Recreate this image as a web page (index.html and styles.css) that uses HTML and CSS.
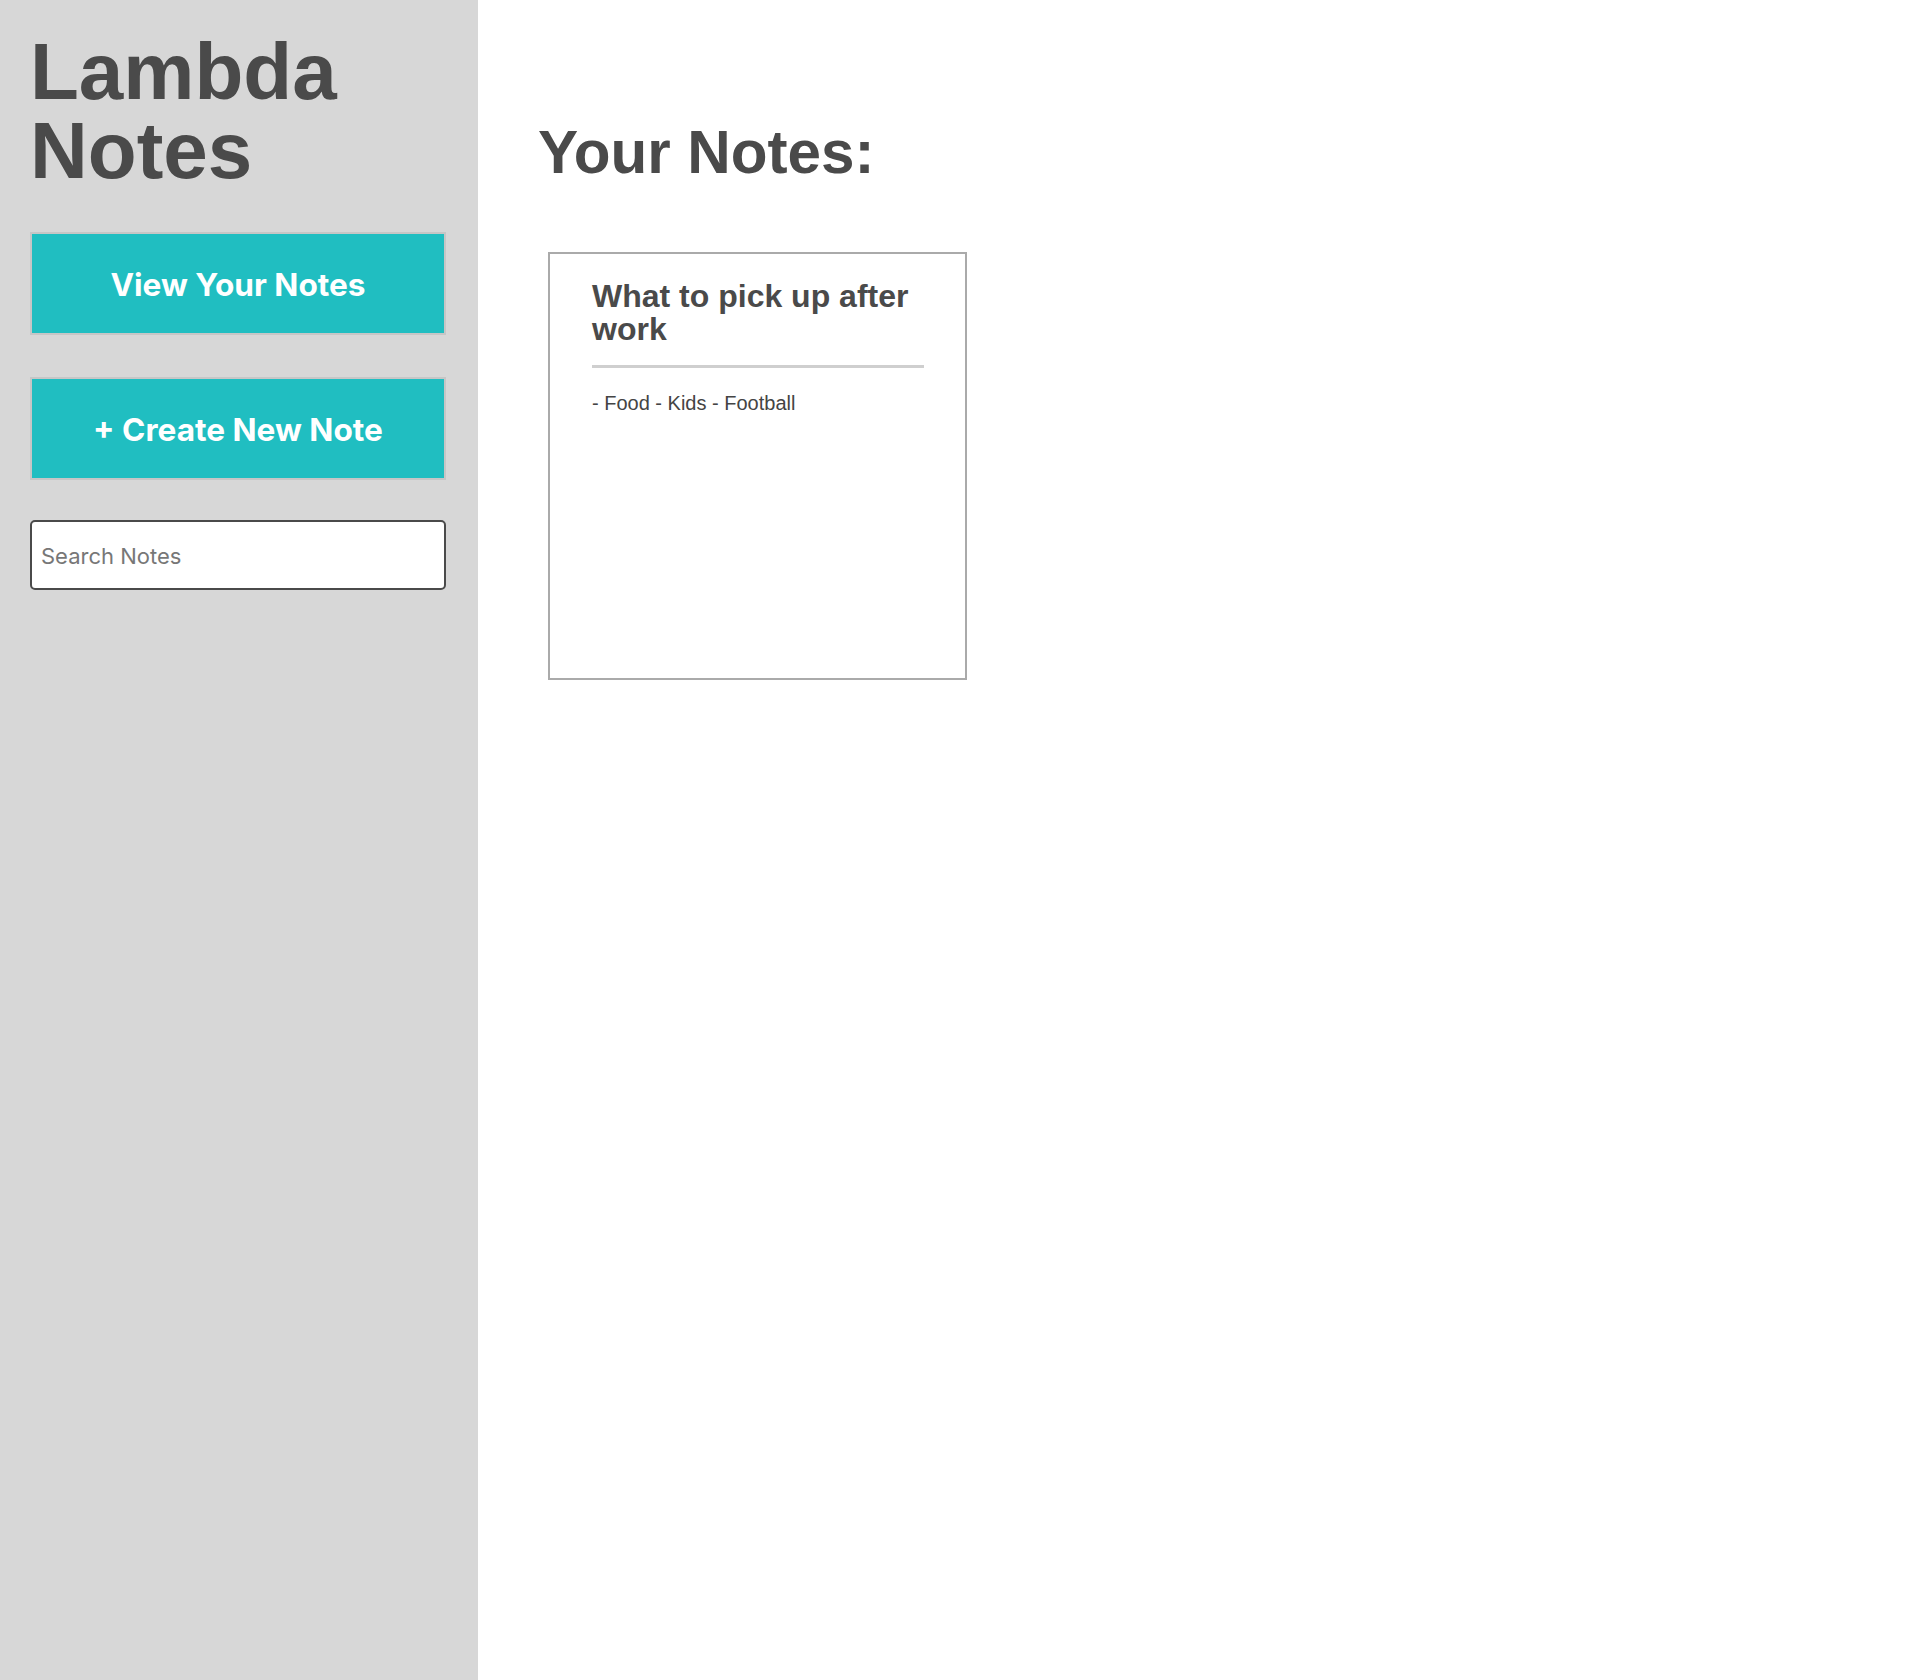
FILE: index.html
```html
<!DOCTYPE html>
<html lang="en">
<head>
<meta charset="utf-8">
<title>Lambda Notes</title>
<link rel="stylesheet" href="styles.css">
</head>
<body>
<div class="app">
  <aside class="sidebar">
    <h1 class="brand">Lambda<br>Notes</h1>
    <a class="nav-btn" href="#">View Your Notes</a>
    <a class="nav-btn" href="#">+ Create New Note</a>
    <input class="search" type="text" placeholder="Search Notes">
  </aside>
  <main class="main">
    <h2 class="page-title">Your Notes:</h2>
    <div class="notes">
      <div class="note-card">
        <h3 class="note-title">What to pick up after work</h3>
        <p class="note-body">- Food - Kids - Football</p>
      </div>
    </div>
  </main>
</div>
</body>
</html>
```
FILE: styles.css
```css
* { box-sizing: border-box; }
html, body { margin: 0; padding: 0; }
body {
  font-family: "Liberation Sans", Arial, sans-serif;
  color: #4a4a4a;
  background: #ffffff;
}
.app {
  display: flex;
  min-height: 1680px;
}
.sidebar {
  width: 478px;
  flex-shrink: 0;
  background: #d7d7d7;
  padding: 32px 32px 0 30px;
  display: flex;
  flex-direction: column;
}
.brand {
  margin: 0 0 42px 0;
  font-size: 80px;
  line-height: 79px;
  font-weight: 700;
  color: #4a4a4a;
}
.nav-btn {
  display: flex;
  align-items: center;
  justify-content: center;
  height: 103px;
  margin-bottom: 42px;
  padding-top: 2px;
  background: #20bec1;
  border: 2px solid #c6c6c6;
  color: #ffffff;
  text-decoration: none;
  font-family: Inter, "Liberation Sans", sans-serif;
  font-weight: 700;
  font-size: 31.6px;
}
.nav-btn + .nav-btn { margin-bottom: 40px; }
.search {
  height: 70px;
  width: 100%;
  border: 2px solid #4a4a4a;
  border-radius: 5px;
  padding: 2px 9px 0 9px;
  font-family: Inter, "Liberation Sans", sans-serif;
  font-size: 22px;
  color: #4a4a4a;
  background: #fff;
  outline: none;
}
.search::placeholder { color: #777777; }
.main {
  flex: 1;
  padding: 118px 0 0 60px;
}
.page-title {
  margin: 0 0 65px 0;
  font-size: 60.2px;
  line-height: 69px;
  font-weight: 700;
  color: #4a4a4a;
}
.notes {
  display: flex;
  flex-wrap: wrap;
  gap: 30px;
  padding-left: 10px;
}
.note-card {
  width: 419px;
  height: 428px;
  border: 2px solid #aaaaaa;
  padding: 26px 41px 0 42px;
  background: #fff;
}
.note-title {
  margin: 0;
  padding-bottom: 19px;
  border-bottom: 3px solid #cfcfcf;
  font-size: 32px;
  line-height: 33px;
  font-weight: 700;
  color: #4a4a4a;
}
.note-body {
  margin: 24px 0 0 0;
  font-size: 20px;
  line-height: 23px;
  color: #444444;
}
```
